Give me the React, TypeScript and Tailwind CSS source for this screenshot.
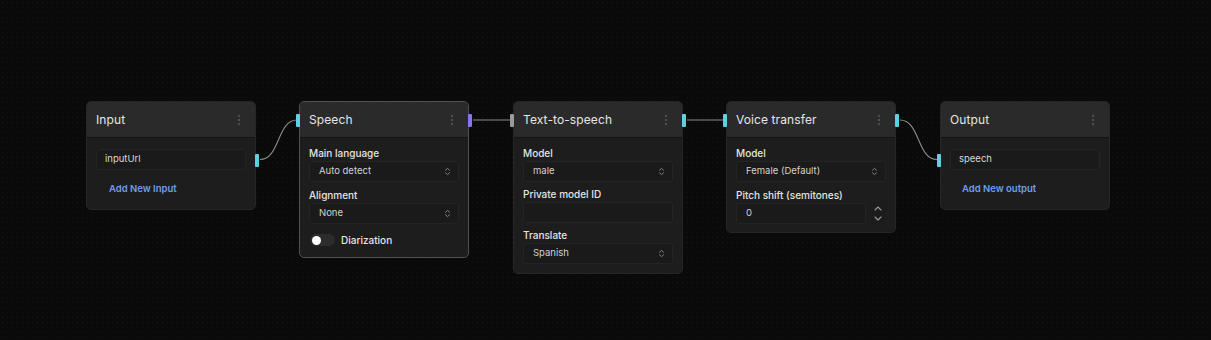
import React from "react";

const Kebab = () => (
  <svg width="4" height="12" viewBox="0 0 4 12" className="shrink-0">
    <circle cx="2" cy="2" r="0.9" fill="#666666" />
    <circle cx="2" cy="6" r="0.9" fill="#666666" />
    <circle cx="2" cy="10" r="0.9" fill="#666666" />
  </svg>
);

const UpDown = () => (
  <svg width="7" height="9" viewBox="0 0 7 9" fill="none" stroke="#858585" strokeWidth="1" strokeLinecap="round" strokeLinejoin="round">
    <path d="M1.5 3.2 L3.5 1.4 L5.5 3.2" />
    <path d="M1.5 5.8 L3.5 7.6 L5.5 5.8" />
  </svg>
);

const Chev = ({ up }: { up?: boolean }) => (
  <svg width="8" height="5" viewBox="0 0 8 5" fill="none" stroke="#9a9a9a" strokeWidth="1.1" strokeLinecap="round" strokeLinejoin="round">
    {up ? <path d="M1 4 L4 1 L7 4" /> : <path d="M1 1 L4 4 L7 1" />}
  </svg>
);

type HandleProps = { side: "left" | "right"; color: string; top: string };
const Handle = ({ side, color, top }: HandleProps) => (
  <div
    className={`absolute w-[4px] h-[13px] rounded-[1px] ${side === "left" ? "left-[-4px]" : "right-[-4px]"} ${top} ${color}`}
  />
);

const Node = ({
  title,
  selected,
  children,
  handles,
  className = "",
}: {
  title: string;
  selected?: boolean;
  children: React.ReactNode;
  handles?: React.ReactNode;
  className?: string;
}) => (
  <div
    className={`relative w-[170px] shrink-0 rounded-[5px] border ${
      selected ? "border-[#505050]" : "border-[#262626]"
    } bg-[#1d1d1d] ${className}`}
  >
    <div className="h-[36px] flex items-center justify-between pl-[9px] pr-[14px] bg-[#2a2a2a] rounded-t-[4px] border-b border-[#141414]">
      <span className="text-[12px] text-[#e6e6e6] tracking-[0.1px]">{title}</span>
      <Kebab />
    </div>
    {children}
    {handles}
  </div>
);

const Label = ({ children }: { children: React.ReactNode }) => (
  <div className="text-[10px] leading-[12px] font-medium text-[#e4e4e4] mb-[2px]">{children}</div>
);

const Select = ({ value }: { value: string }) => (
  <div className="h-[21px] flex items-center justify-between pl-[9px] pr-[7px] bg-[#1a1a1a] border border-[#242424] rounded-[3px]">
    <span className="text-[9.5px] text-[#d2d2d2]">{value}</span>
    <UpDown />
  </div>
);

const Field = ({ value }: { value: string }) => (
  <div className="h-[21px] flex items-center pl-[8px] bg-[#1a1a1a] border border-[#242424] rounded-[3px]">
    <span className="text-[9.5px] text-[#d8d8d8]">{value}</span>
  </div>
);

export default function App() {
  return (
    <div
      className="relative w-[1211px] h-[340px] overflow-hidden bg-[#0a0a0a] bg-[radial-gradient(#151515_0.8px,transparent_0.8px)] bg-[size:5px_5px]"
      style={{ fontFamily: "Inter, 'Noto Sans', sans-serif" }}
    >
      <svg className="absolute inset-0 pointer-events-none" width="1211" height="340">
        <g fill="none" stroke="#8c8c8c" strokeWidth="1.1">
          <path d="M260 159.5 C 280 159.5, 277 120, 297 120" />
          <path d="M473 120 L 510 120" />
          <path d="M687 120 L 723 120" />
          <path d="M900 120 C 920 120, 917 159.5, 937 159.5" />
        </g>
      </svg>

      <div className="relative flex items-start pl-[86px] pt-[101px]">
        {/* Input */}
        <Node
          title="Input"
          handles={<Handle side="right" color="bg-[#5fd0e2]" top="top-[52px]" />}
        >
          <div className="px-[9px] pt-[11px] pb-[14px]">
            <Field value="inputUrl" />
            <div className="mt-[13px] pl-[13px] text-[9.5px] leading-[12px] font-semibold text-[#6e9df0]">
              Add New Input
            </div>
          </div>
        </Node>

        {/* Speech */}
        <Node
          title="Speech"
          selected
          className="ml-[43px]"
          handles={
            <>
              <Handle side="left" color="bg-[#5fd0e2]" top="top-[12px]" />
              <Handle side="right" color="bg-[#8b74ee]" top="top-[12px]" />
            </>
          }
        >
          <div className="px-[9px] pt-[9px] pb-[11px] flex flex-col gap-[7px]">
            <div>
              <Label>Main language</Label>
              <Select value="Auto detect" />
            </div>
            <div>
              <Label>Alignment</Label>
              <Select value="None" />
            </div>
            <div className="flex items-center gap-[6px] mt-[3px] pl-[1px]">
              <div className="w-[25px] h-[12px] rounded-full bg-[#2c2c2c] flex items-center pl-[2px]">
                <div className="w-[9px] h-[9px] rounded-full bg-white" />
              </div>
              <span className="text-[10px] leading-[12px] font-medium text-[#e4e4e4]">Diarization</span>
            </div>
          </div>
        </Node>

        {/* Text-to-speech */}
        <Node
          title="Text-to-speech"
          className="ml-[44px]"
          handles={
            <>
              <Handle side="left" color="bg-[#9a9a9a]" top="top-[12px]" />
              <Handle side="right" color="bg-[#5fd0e2]" top="top-[12px]" />
            </>
          }
        >
          <div className="px-[9px] pt-[9px] pb-[9px] flex flex-col gap-[6px]">
            <div>
              <Label>Model</Label>
              <Select value="male" />
            </div>
            <div>
              <Label>Private model ID</Label>
              <div className="h-[21px] bg-[#1a1a1a] border border-[#242424] rounded-[3px]" />
            </div>
            <div>
              <Label>Translate</Label>
              <Select value="Spanish" />
            </div>
          </div>
        </Node>

        {/* Voice transfer */}
        <Node
          title="Voice transfer"
          className="ml-[43px]"
          handles={
            <>
              <Handle side="left" color="bg-[#5fd0e2]" top="top-[12px]" />
              <Handle side="right" color="bg-[#5fd0e2]" top="top-[12px]" />
            </>
          }
        >
          <div className="px-[9px] pt-[9px] pb-[8px] flex flex-col gap-[7px]">
            <div>
              <Label>Model</Label>
              <Select value="Female (Default)" />
            </div>
            <div>
              <Label>Pitch shift (semitones)</Label>
              <div className="flex h-[21px] gap-[4px]">
                <div className="flex-1 flex items-center pl-[9px] bg-[#1a1a1a] border border-[#242424] rounded-[3px]">
                  <span className="text-[9.5px] text-[#d2d2d2]">0</span>
                </div>
                <div className="w-[16px] flex flex-col items-center justify-between py-[3px] bg-[#1c1c1c] rounded-[3px]">
                  <Chev up />
                  <Chev />
                </div>
              </div>
            </div>
          </div>
        </Node>

        {/* Output */}
        <Node
          title="Output"
          className="ml-[44px]"
          handles={<Handle side="left" color="bg-[#5fd0e2]" top="top-[52px]" />}
        >
          <div className="px-[9px] pt-[11px] pb-[14px]">
            <Field value="speech" />
            <div className="mt-[13px] pl-[12px] text-[9.5px] leading-[12px] font-semibold text-[#6e9df0]">
              Add New output
            </div>
          </div>
        </Node>
      </div>
    </div>
  );
}
